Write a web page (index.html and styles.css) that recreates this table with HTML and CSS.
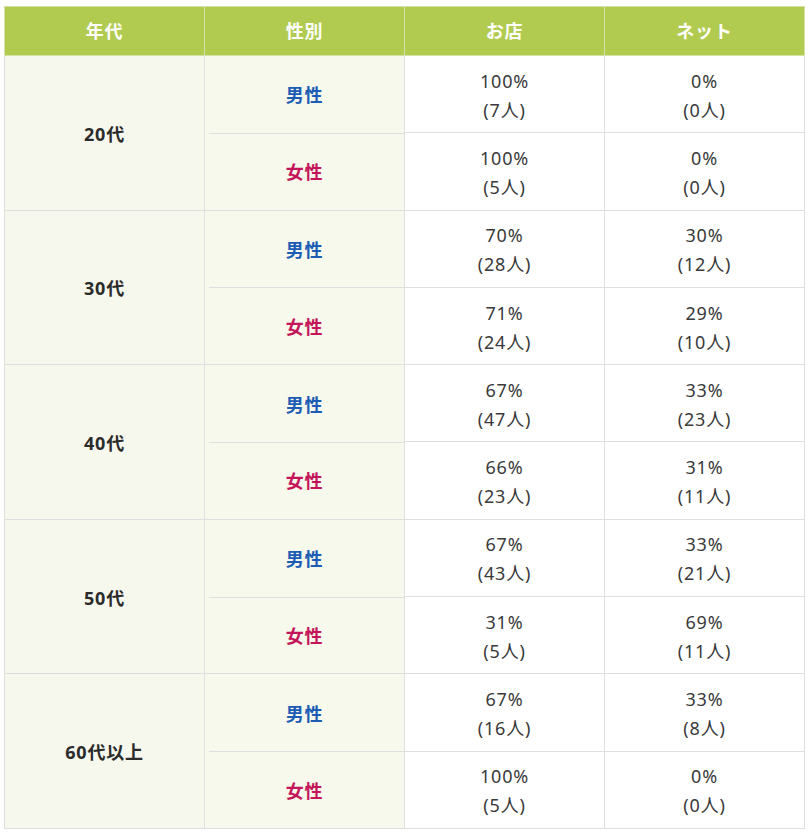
FILE: index.html
```html
<!DOCTYPE html>
<html lang="ja">
<head>
<meta charset="utf-8">
<link rel="stylesheet" href="styles.css">
</head>
<body>
<table class="stats">
  <thead>
    <tr><th>年代</th><th>性別</th><th>お店</th><th>ネット</th></tr>
  </thead>
  <tbody>
    <tr><td class="age" rowspan="2">20代</td><td class="g male">男性</td><td>100%<br>(7人)</td><td>0%<br>(0人)</td></tr>
    <tr class="sub"><td class="g female">女性</td><td>100%<br>(5人)</td><td>0%<br>(0人)</td></tr>
    <tr><td class="age" rowspan="2">30代</td><td class="g male">男性</td><td>70%<br>(28人)</td><td>30%<br>(12人)</td></tr>
    <tr class="sub"><td class="g female">女性</td><td>71%<br>(24人)</td><td>29%<br>(10人)</td></tr>
    <tr><td class="age" rowspan="2">40代</td><td class="g male">男性</td><td>67%<br>(47人)</td><td>33%<br>(23人)</td></tr>
    <tr class="sub"><td class="g female">女性</td><td>66%<br>(23人)</td><td>31%<br>(11人)</td></tr>
    <tr><td class="age" rowspan="2">50代</td><td class="g male">男性</td><td>67%<br>(43人)</td><td>33%<br>(21人)</td></tr>
    <tr class="sub"><td class="g female">女性</td><td>31%<br>(5人)</td><td>69%<br>(11人)</td></tr>
    <tr><td class="age" rowspan="2">60代以上</td><td class="g male">男性</td><td>67%<br>(16人)</td><td>33%<br>(8人)</td></tr>
    <tr class="sub"><td class="g female">女性</td><td>100%<br>(5人)</td><td>0%<br>(0人)</td></tr>
  </tbody>
</table>
</body>
</html>
```
FILE: styles.css
```css
html, body {
  margin: 0;
  background: #ffffff;
}
body {
  padding: 6px 3px 0 4px;
  font-family: "Noto Sans", "Noto Sans CJK JP", sans-serif;
  color: #333333;
}
.stats {
  width: 801px;
  border-collapse: collapse;
  table-layout: fixed;
  font-size: 18px;
  line-height: 29px;
  letter-spacing: 0.8px;
}
.stats th {
  background: #b1cb50;
  color: #ffffff;
  font-weight: bold;
  font-size: 18px;
  height: 47px;
  padding: 1px 0 0;
  border: 1px solid #d3e2a2;
  text-align: center;
  vertical-align: middle;
}
.stats tbody tr {
  height: 77.3px;
}
.stats td {
  border: 1px solid #dfdfdf;
  text-align: center;
  vertical-align: middle;
  padding: 3px 6px 0;
  color: #3a3a3a;
}
.stats td.age {
  background: #f6f8ee;
  font-weight: bold;
  color: #2b2b2b;
}
.stats td.g {
  background: #f6f9ec;
  font-weight: bold;
}
.stats td.male {
  color: #1c5cb4;
}
.stats td.female {
  color: #c4155a;
}
.stats tr.sub td.g {
  border-top-style: hidden;
  background: linear-gradient(#dfdfdf, #dfdfdf) no-repeat 4px 0 / calc(100% - 4px) 1px, #f6f9ec;
}
```
